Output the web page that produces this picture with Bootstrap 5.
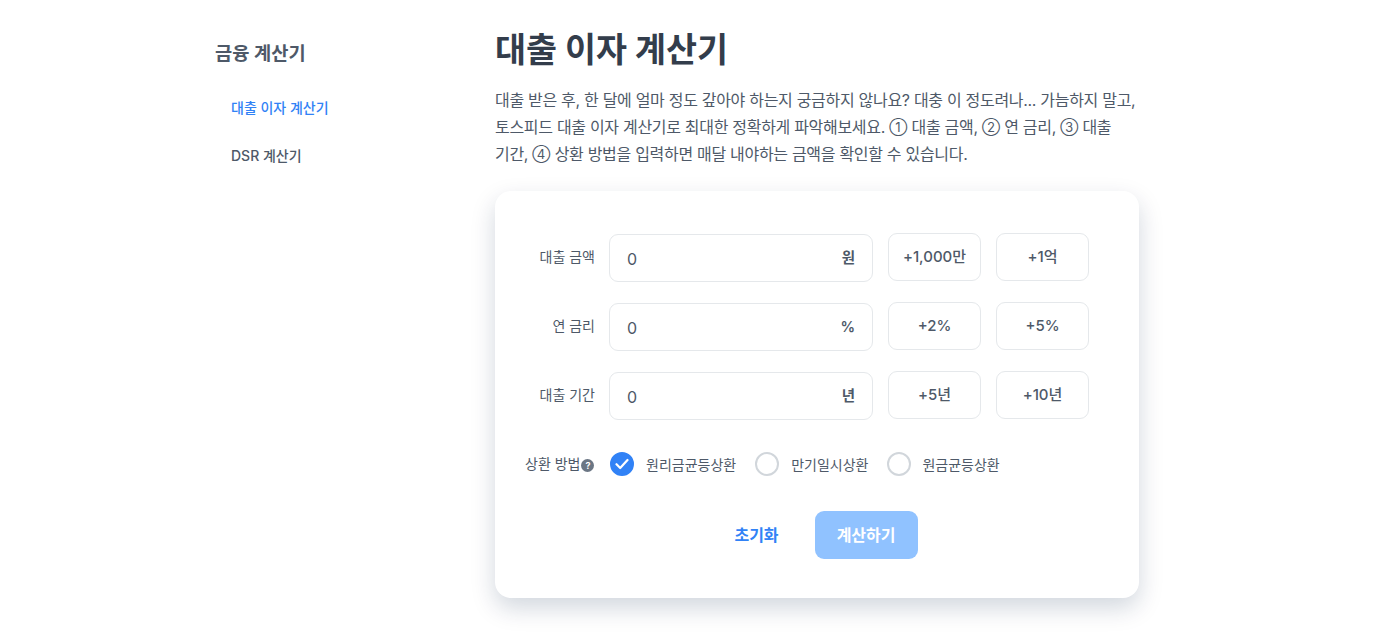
<!doctype html>
<html lang="ko"><head><meta charset="utf-8">
<link href="https://cdn.jsdelivr.net/npm/bootstrap@5.3.0/dist/css/bootstrap.min.css" rel="stylesheet">
<style>
html,body{height:638px;overflow:hidden;background:#fff}
body{font-family:"Inter","Noto Sans CJK KR",sans-serif;color:#4e5968}
.shell{width:968px;margin:0 auto}
.side{width:280px;flex:none;padding-top:39px}
.side-title{font-size:18.7px;font-weight:600;line-height:30px;color:#4e5968;margin:0 0 15px}
.side-item{display:block;font-size:14px;font-weight:500;line-height:24px;padding:12px 16px;color:#4e5968;text-decoration:none}
.side-item.on{color:#3182f6}
.main-col{width:644px;flex:none;padding-top:25px}
.page-h{font-size:33.7px;font-weight:700;line-height:50px;color:#333d4b;margin:0 0 12px}
.intro{font-size:16px;line-height:27px;color:#4e5968;margin:0 0 23px;letter-spacing:-.3px;word-break:keep-all}
.circ{font-size:13px;line-height:1;letter-spacing:0;vertical-align:1px}
.calc{height:407px;background:#fff;border-radius:16px;box-shadow:0 10px 24px rgba(2,32,71,.18);padding:42px 30px 0}
.frow{height:48px;margin-bottom:21px;gap:14px}
.flabel{width:70px;flex:none;text-align:right;font-size:14px;color:#4e5968;white-space:nowrap;margin-top:-2px}
.fbox{width:264px;height:48px;flex:none;border:1px solid #e5e8eb;border-radius:9px;padding:2px 17px 0;font-size:16px;color:#4e5968;margin-top:1px}
.unit{font-size:14.5px;font-weight:600;color:#4e5968;margin-top:-2px}
.quick{width:93px;height:48px;flex:none;border:1px solid #e5e8eb;border-radius:9px;font-size:15px;font-weight:450;color:#4e5968;background:#fff;padding:1px 0 0;margin-top:-1px}
.quick-set{margin-left:1px;gap:15px}
.radio-row{height:24px;gap:15px;margin-top:33px}
.tipdot{width:13px;height:13px;border-radius:50%;background:#6b7684;color:#fff;font-size:9px;font-weight:700;line-height:13px;text-align:center;display:inline-block;margin:0 1px 0 1px;vertical-align:-.5px}
.ropt{font-size:14px;color:#4e5968}
.rmark{width:24px;height:24px;border-radius:50%;border:2px solid #d1d6db;flex:none;background:#fff}
.rmark.on{background:#3182f6;border-color:#3182f6}
.rname{margin-left:12px;margin-right:19px}
.rname:last-child{margin-right:0;margin-left:11px}
.actions{margin-top:35px;padding-left:18px;gap:36px}
.ghost{font-size:16px;font-weight:600;color:#3182f6;border:0;background:none;padding:0;line-height:48px}
.go{width:103px;height:48px;border:0;border-radius:9px;background:#90c2ff;color:#fff;font-size:16px;font-weight:600;padding:0}
</style></head><body>
<div class="shell d-flex">
  <aside class="side">
    <h2 class="side-title">금융 계산기</h2>
    <a class="side-item on" href="#">대출 이자 계산기</a>
    <a class="side-item" href="#">DSR 계산기</a>
  </aside>
  <main class="main-col">
    <h1 class="page-h">대출 이자 계산기</h1>
    <p class="intro">대출 받은 후, 한 달에 얼마 정도 갚아야 하는지 궁금하지 않나요? 대충 이 정도려나... 가늠하지 말고, 토스피드 대출 이자 계산기로 최대한 정확하게 파악해보세요. <span class="circ">①</span> 대출 금액, <span class="circ">②</span> 연 금리, <span class="circ">③</span> 대출 기간, <span class="circ">④</span> 상환 방법을 입력하면 매달 내야하는 금액을 확인할 수 있습니다.</p>
    <section class="calc">
      <div class="frow d-flex align-items-center">
        <div class="flabel">대출 금액</div>
        <div class="fbox d-flex align-items-center justify-content-between"><span>0</span><span class="unit">원</span></div>
        <div class="d-flex quick-set"><button class="quick">+1,000만</button><button class="quick">+1억</button></div>
      </div>
      <div class="frow d-flex align-items-center">
        <div class="flabel">연 금리</div>
        <div class="fbox d-flex align-items-center justify-content-between"><span>0</span><span class="unit">%</span></div>
        <div class="d-flex quick-set"><button class="quick">+2%</button><button class="quick">+5%</button></div>
      </div>
      <div class="frow d-flex align-items-center">
        <div class="flabel">대출 기간</div>
        <div class="fbox d-flex align-items-center justify-content-between"><span>0</span><span class="unit">년</span></div>
        <div class="d-flex quick-set"><button class="quick">+5년</button><button class="quick">+10년</button></div>
      </div>
      <div class="radio-row d-flex align-items-center">
        <div class="flabel">상환 방법<span class="tipdot">?</span></div>
        <div class="d-flex align-items-center ropt">
          <span class="rmark on d-flex align-items-center justify-content-center"><svg width="14" height="12" viewBox="0 0 14 12"><path d="M1.5 6.2 5.2 10 12.5 2" fill="none" stroke="#fff" stroke-width="2.2" stroke-linecap="round" stroke-linejoin="round"/></svg></span>
          <span class="rname">원리금균등상환</span>
          <span class="rmark"></span>
          <span class="rname">만기일시상환</span>
          <span class="rmark"></span>
          <span class="rname">원금균등상환</span>
        </div>
      </div>
      <div class="actions d-flex justify-content-center align-items-center">
        <button class="ghost">초기화</button>
        <button class="go">계산하기</button>
      </div>
    </section>
  </main>
</div>
</body></html>
